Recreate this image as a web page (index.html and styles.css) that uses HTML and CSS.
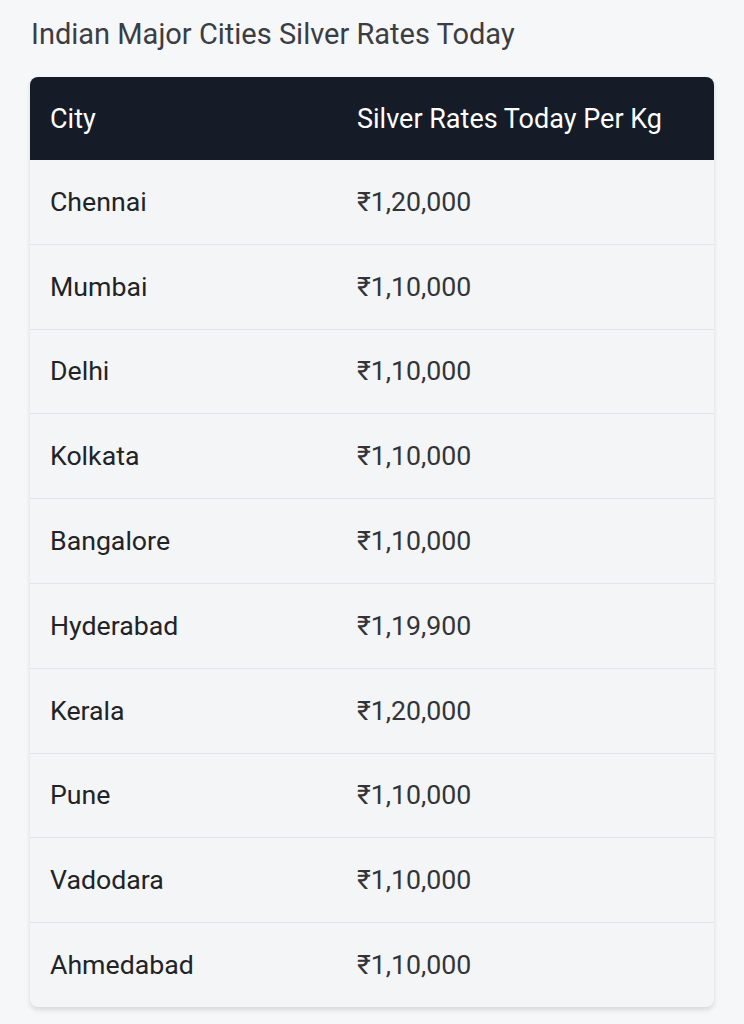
FILE: index.html
```html
<!DOCTYPE html>
<html lang="en">
<head>
<meta charset="utf-8">
<title>Indian Major Cities Silver Rates Today</title>
<link rel="stylesheet" href="styles.css">
</head>
<body>
<main class="page">
  <h2 class="title">Indian Major Cities Silver Rates Today</h2>
  <div class="table-wrap">
    <table class="rates">
      <thead>
        <tr><th class="col-city">City</th><th>Silver Rates Today Per Kg</th></tr>
      </thead>
      <tbody>
        <tr><td class="city">Chennai</td><td class="rate">₹1,20,000</td></tr>
        <tr><td class="city">Mumbai</td><td class="rate">₹1,10,000</td></tr>
        <tr><td class="city">Delhi</td><td class="rate">₹1,10,000</td></tr>
        <tr><td class="city">Kolkata</td><td class="rate">₹1,10,000</td></tr>
        <tr><td class="city">Bangalore</td><td class="rate">₹1,10,000</td></tr>
        <tr><td class="city">Hyderabad</td><td class="rate">₹1,19,900</td></tr>
        <tr><td class="city">Kerala</td><td class="rate">₹1,20,000</td></tr>
        <tr><td class="city">Pune</td><td class="rate">₹1,10,000</td></tr>
        <tr><td class="city">Vadodara</td><td class="rate">₹1,10,000</td></tr>
        <tr><td class="city">Ahmedabad</td><td class="rate">₹1,10,000</td></tr>
      </tbody>
    </table>
  </div>
</main>
</body>
</html>
```
FILE: styles.css
```css
html, body {
  margin: 0;
  padding: 0;
  background: #f6f7f9;
  font-family: Roboto, "Noto Sans", "Liberation Sans", sans-serif;
}
.page {
  padding: 17px 30px 18px 30px;
}
.title {
  margin: 0 0 26px 1px;
  font-size: 29px;
  line-height: 34px;
  font-weight: 400;
  color: #3b3d42;
}
.table-wrap {
  border-radius: 8px;
  overflow: hidden;
  box-shadow: 0 3px 5px rgba(0, 0, 0, 0.12);
  background: #f4f5f7;
}
.rates {
  width: 100%;
  border-collapse: collapse;
}
.rates th {
  background: #151c27;
  color: #ffffff;
  font-weight: 400;
  font-size: 27px;
  text-align: left;
  height: 83px;
  padding: 0 20px;
}
.rates th.col-city {
  width: 267px;
}
.rates td {
  height: 83.8px;
  padding: 0 20px;
  font-size: 26.7px;
  color: #222326;
  border-top: 1px solid #e2e4e8;
}
.rates tbody tr:first-child td {
  border-top: none;
}
.rates td.rate {
  color: #333438;
}
```
